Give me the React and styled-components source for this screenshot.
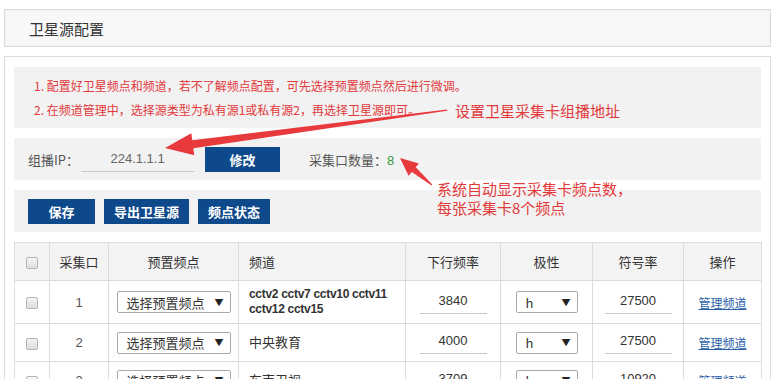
import React from "react"
import styled, { createGlobalStyle } from "styled-components"

const GlobalStyle = createGlobalStyle`
  body {
    margin: 0;
    background: #fff;
    font-family: "Liberation Sans", "Noto Sans CJK SC", sans-serif;
    color: #333;
  }
`

const Page = styled.div`
  position: relative;
  width: 773px;
  height: 379px;
  overflow: hidden;
  padding: 9px 2px 0 4px;
  box-sizing: border-box;
`

const TitleBar = styled.div`
  height: 38px;
  box-sizing: border-box;
  border: 1px solid #dcdcdc;
  box-shadow: inset 0 0 0 1px #f0f0f0;
  background: #f8f8f8;
  display: flex;
  align-items: center;
  padding-left: 24px;
  font-family: "Noto Sans CJK SC", sans-serif;
  font-size: 15px;
  color: #333;
`

const Panel = styled.div`
  margin-top: 9px;
  border: 1px solid #dcdcdc;
  border-bottom: none;
  padding: 10px 9px 0 9px;
  box-sizing: border-box;
  display: flex;
  flex-direction: column;
  gap: 10px;
`

const GrayBox = styled.div`
  flex-shrink: 0;
  background: #f2f2f2;
  height: ${p => p.h}px;
  box-sizing: border-box;
  display: flex;
  flex-direction: ${p => (p.column ? "column" : "row")};
  justify-content: ${p => (p.column ? "center" : "flex-start")};
  align-items: ${p => (p.column ? "flex-start" : "center")};
  padding-left: ${p => p.pl}px;
  gap: ${p => p.gap}px;
`

const Note = styled.div`
  font-family: "Noto Sans CJK SC", sans-serif;
  font-size: 12px;
  line-height: 24px;
  color: #e2393b;
`

const Label = styled.span`
  font-family: "Noto Sans CJK SC", sans-serif;
  font-size: 13px;
  color: #555;
`

const IpInput = styled.div`
  width: 113px;
  height: 24px;
  border-bottom: 1px solid #c8c8c8;
  display: flex;
  align-items: center;
  justify-content: center;
  font-size: 13px;
  color: #666;
  margin-left: 2px;
`

const Button = styled.button`
  height: 25px;
  width: ${p => p.w}px;
  border: none;
  background: #0e4a8b;
  color: #fff;
  font-family: "Noto Sans CJK SC", sans-serif;
  font-weight: 700;
  font-size: 13px;
  padding: 0;
  cursor: pointer;
`

const Count = styled.span`
  font-family: "Noto Sans CJK SC", sans-serif;
  font-size: 13px;
  color: #555;
  margin-left: 29px;
  b {
    font-weight: 400;
    color: #3b9a3b;
    font-family: "Liberation Sans", sans-serif;
  }
`

const Table = styled.table`
  flex-shrink: 0;
  border-collapse: collapse;
  width: 747px;
  table-layout: fixed;
  font-size: 13px;
  th,
  td {
    border: 1px solid #dcdcdc;
    text-align: center;
    padding: 0;
  }
  th {
    background: #f3f3f3;
    height: 37px;
    font-family: "Noto Sans CJK SC", sans-serif;
    font-weight: 400;
    color: #333;
  }
`

const Row = styled.tr`
  height: ${p => p.h}px;
  td {
    color: #555;
  }
`

const Cell = styled.td`
  && {
    text-align: ${p => (p.left ? "left" : "center")};
    padding-left: ${p => (p.left ? 10 : 0)}px;
  }
`

const Check = styled.span`
  display: inline-block;
  width: 10px;
  height: 10px;
  border: 1px solid #b5b5b5;
  border-radius: 2px;
  background: linear-gradient(#f4f4f4, #dedede);
  vertical-align: middle;
`

const Select = styled.div`
  display: inline-flex;
  align-items: center;
  justify-content: space-between;
  box-sizing: border-box;
  width: ${p => p.w}px;
  height: 22px;
  border: 1px solid #a9a9a9;
  border-radius: 2px;
  background: #fff;
  padding: 0 6px 0 9px;
  font-family: "Noto Sans CJK SC", sans-serif;
  font-size: 13px;
  color: #333;
  vertical-align: middle;
  span {
    font-size: 9px;
    color: #222;
  }
`

const Channel = styled.div`
  font-weight: ${p => (p.bold ? 700 : 400)};
  font-family: "Liberation Sans", "Noto Sans CJK SC", sans-serif;
  font-size: ${p => (p.bold ? 12 : 13)}px;
  letter-spacing: ${p => (p.bold ? -0.3 : 0)}px;
  line-height: 15px;
  white-space: nowrap;
  color: #333;
`

const LineInput = styled.div`
  display: inline-block;
  width: 67px;
  height: 22px;
  line-height: 20px;
  border-bottom: 1px solid #c8c8c8;
  font-size: 13px;
  color: #333;
  vertical-align: middle;
`

const ManageLink = styled.a`
  font-family: "Noto Sans CJK SC", sans-serif;
  font-size: 12px;
  color: #2b5ea8;
  text-decoration: underline;
`

const Overlay = styled.svg`
  position: absolute;
  left: 0;
  top: 0;
  pointer-events: none;
`

const Callout = styled.div`
  position: absolute;
  font-family: "Noto Sans CJK SC", sans-serif;
  font-size: 15px;
  line-height: 19px;
  color: #e2393b;
  white-space: nowrap;
`

const rows = [
  { id: 1, ch: "cctv2 cctv7 cctv10 cctv11\ncctv12 cctv15", bold: true, fq: "3840", sr: "27500", h: 43 },
  { id: 2, ch: "中央教育", fq: "4000", sr: "27500", h: 38 },
  { id: 3, ch: "东南卫视", fq: "3709", sr: "10920", h: 38 },
]

const App = () => {
  return (
    <Page>
      <GlobalStyle />
      <TitleBar>卫星源配置</TitleBar>
      <Panel>
        <GrayBox h={61} pl={20} column>
          <Note>1. 配置好卫星频点和频道，若不了解频点配置，可先选择预置频点然后进行微调。</Note>
          <Note>2. 在频道管理中，选择源类型为私有源1或私有源2，再选择卫星源即可。</Note>
        </GrayBox>
        <GrayBox h={42} pl={14} gap={0}>
          <Label>组播IP：</Label>
          <IpInput>224.1.1.1</IpInput>
          <Button w={75} style={{ marginLeft: 11 }}>修改</Button>
          <Count>
            采集口数量：<b>8</b>
          </Count>
        </GrayBox>
        <GrayBox h={42} pl={14} gap={9}>
          <Button w={67}>保存</Button>
          <Button w={85}>导出卫星源</Button>
          <Button w={72}>频点状态</Button>
        </GrayBox>
        <Table>
          <colgroup>
            <col style={{ width: 35 }} />
            <col style={{ width: 59 }} />
            <col style={{ width: 130 }} />
            <col style={{ width: 167 }} />
            <col style={{ width: 95 }} />
            <col style={{ width: 92 }} />
            <col style={{ width: 91 }} />
            <col style={{ width: 78 }} />
          </colgroup>
          <thead>
            <tr>
              <th><Check /></th>
              <th>采集口</th>
              <th>预置频点</th>
              <Cell as="th" left>频道</Cell>
              <th>下行频率</th>
              <th>极性</th>
              <th>符号率</th>
              <th>操作</th>
            </tr>
          </thead>
          <tbody>
            {rows.map(r => (
              <Row key={r.id} h={r.h}>
                <td><Check /></td>
                <td>{r.id}</td>
                <td><Select w={114}>选择预置频点<span>▼</span></Select></td>
                <Cell left>
                  {r.ch.split("\n").map(line => (
                    <Channel key={line} bold={r.bold}>{line}</Channel>
                  ))}
                </Cell>
                <td><LineInput>{r.fq}</LineInput></td>
                <td><Select w={62}>h<span>▼</span></Select></td>
                <td><LineInput>{r.sr}</LineInput></td>
                <td><ManageLink href="#">管理频道</ManageLink></td>
              </Row>
            ))}
          </tbody>
        </Table>
      </Panel>

      <Overlay width="773" height="379" viewBox="0 0 773 379">
        <polygon
          fill="#e8393d"
          points="447,109.4 447.2,110.8 193.3,148.2 194.3,155.2 165,148 191.3,133.3 192.3,140.3"
        />
        <polygon
          fill="#e8393d"
          points="432.3,184.6 431.7,185.4 411.8,171.9 408.6,175.7 400,158 418.9,163.5 415.7,167.3"
        />
      </Overlay>
      <Callout style={{ left: 455, top: 101 }}>设置卫星采集卡组播地址</Callout>
      <Callout style={{ left: 437, top: 179 }}>
        系统自动显示采集卡频点数，
        <br />
        每张采集卡8个频点
      </Callout>
    </Page>
  )
}

export default App
